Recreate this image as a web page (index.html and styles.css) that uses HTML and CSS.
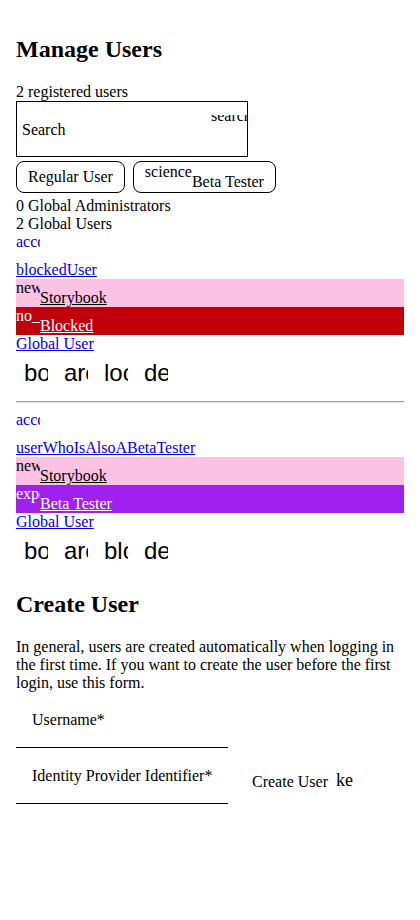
FILE: index.html
```html
<!DOCTYPE html>
<html lang="en">
<head>
<meta charset="utf-8">
<title>Manage Users</title>
<link rel="stylesheet" href="styles.css">
</head>
<body>
<main class="page">
  <h2 class="title">Manage Users</h2>
  <div class="count">2 registered users</div>
  <label class="search">
    <span class="search-placeholder">Search</span>
    <span class="search-icon"><span class="search-icon-text">search</span></span>
  </label>
  <div class="filters">
    <button class="chip" type="button">Regular User</button>
    <button class="chip" type="button"><span class="chip-icon">science</span>Beta Tester</button>
  </div>
  <div class="stat">0 Global Administrators</div>
  <div class="stat">2 Global Users</div>

  <ul class="users">
    <li class="user">
      <a class="avatar" href="#"><span class="clip">account_circle</span></a>
      <a class="user-name" href="#">blockedUser</a>
      <div class="tag tag-pink"><span class="clip">new_releases</span><a class="tag-link" href="#">Storybook</a></div>
      <div class="tag tag-red"><span class="clip">no_accounts</span><a class="tag-link" href="#">Blocked</a></div>
      <a class="role" href="#">Global User</a>
      <div class="actions">
        <button class="icon-btn" type="button"><span class="icon-text">bookmark</span></button>
        <button class="icon-btn" type="button"><span class="icon-text">archive</span></button>
        <button class="icon-btn" type="button"><span class="icon-text">lock</span></button>
        <button class="icon-btn" type="button"><span class="icon-text">delete</span></button>
      </div>
      <hr class="divider">
    </li>
    <li class="user">
      <a class="avatar" href="#"><span class="clip">account_circle</span></a>
      <a class="user-name" href="#">userWhoIsAlsoABetaTester</a>
      <div class="tag tag-pink"><span class="clip">new_releases</span><a class="tag-link" href="#">Storybook</a></div>
      <div class="tag tag-purple"><span class="clip">experiment</span><a class="tag-link" href="#">Beta Tester</a></div>
      <a class="role" href="#">Global User</a>
      <div class="actions">
        <button class="icon-btn" type="button"><span class="icon-text">bookmark</span></button>
        <button class="icon-btn" type="button"><span class="icon-text">archive</span></button>
        <button class="icon-btn" type="button"><span class="icon-text">block</span></button>
        <button class="icon-btn" type="button"><span class="icon-text">delete</span></button>
      </div>
    </li>
  </ul>

  <h2 class="title">Create User</h2>
  <p class="intro">In general, users are created automatically when logging in the first time. If you want to create the user before the first login, use this form.</p>
  <form class="create-form">
    <div class="fields">
      <label class="field"><span class="field-label">Username*</span></label>
      <label class="field"><span class="field-label">Identity Provider Identifier*</span></label>
    </div>
    <button class="create-btn" type="button">Create User<span class="key-icon">key</span></button>
  </form>
</main>
</body>
</html>
```

FILE: styles.css
```css
html, body {
  background: #fff;
}

body {
  margin: 8px;
  font-family: "Liberation Serif", "Times New Roman", serif;
  font-size: 16px;
  color: #000;
}

.page {
  padding: 8px;
}

.title {
  font-size: 24px;
  font-weight: bold;
  margin: 0.83em 0;
}

.count {
  line-height: normal;
}

.search {
  position: relative;
  display: flex;
  align-items: center;
  box-sizing: border-box;
  width: 232px;
  height: 56px;
  border: 1px solid #000;
  padding: 2px 0 0 5px;
  overflow: hidden;
}

.search-icon {
  position: absolute;
  left: 194px;
  top: 13px;
  width: 40px;
  height: 6px;
  overflow: hidden;
}

.search-icon-text {
  display: block;
  line-height: 16px;
  margin-top: -7px;
  white-space: nowrap;
}

.filters {
  display: flex;
  gap: 8px;
  margin: 4px 0;
}

.chip {
  font: inherit;
  color: #000;
  background: #fff;
  border: 1px solid #000;
  border-radius: 8px;
  padding: 1px 11px;
  margin: 0;
}

.chip-icon {
  display: inline-block;
  height: 24px;
  overflow: hidden;
  white-space: nowrap;
}

.users {
  list-style: none;
  margin: 0;
  padding: 0;
}

.avatar {
  display: block;
}

.clip {
  display: inline-block;
  width: 24px;
  height: 24px;
  overflow: hidden;
  white-space: nowrap;
}

.user-name,
.role {
  display: block;
  width: max-content;
}

.tag {
  display: block;
}

.tag-pink {
  background: #fbc2e3;
  color: #000;
}

.tag-red {
  background: #c20009;
  color: #fff;
}

.tag-purple {
  background: #a020f0;
  color: #fff;
}

.tag-link {
  color: inherit;
}

.actions {
  display: flex;
}

.icon-btn {
  width: 40px;
  height: 40px;
  padding: 8px;
  margin: 0;
  border: 0;
  background: transparent;
}

.icon-text {
  display: block;
  width: 24px;
  height: 24px;
  overflow: hidden;
  white-space: nowrap;
  text-align: left;
  font-family: "Liberation Sans", Arial, sans-serif;
  font-size: 24px;
  line-height: 24px;
  color: #000;
}

.divider {
  margin: 8px 0;
  height: 0;
  border: 0;
  border-top: 1px solid #a0a0a0;
  border-bottom: 1px solid #e8e8e8;
}

.intro {
  margin: 0;
}

.create-form {
  display: flex;
  align-items: flex-end;
}

.fields {
  display: flex;
  flex-direction: column;
  width: 212px;
}

.field {
  display: flex;
  align-items: center;
  box-sizing: border-box;
  height: 56px;
  padding: 1px 0 0 16px;
  border-bottom: 1px solid #000;
}

.create-btn {
  font: inherit;
  color: #000;
  background: transparent;
  border: 0;
  margin: 0;
  padding: 0 24px 13px;
  white-space: nowrap;
}

.key-icon {
  display: inline-block;
  vertical-align: bottom;
  width: 17px;
  margin-left: 8px;
  overflow: hidden;
  white-space: nowrap;
  font-size: 18px;
}
```
